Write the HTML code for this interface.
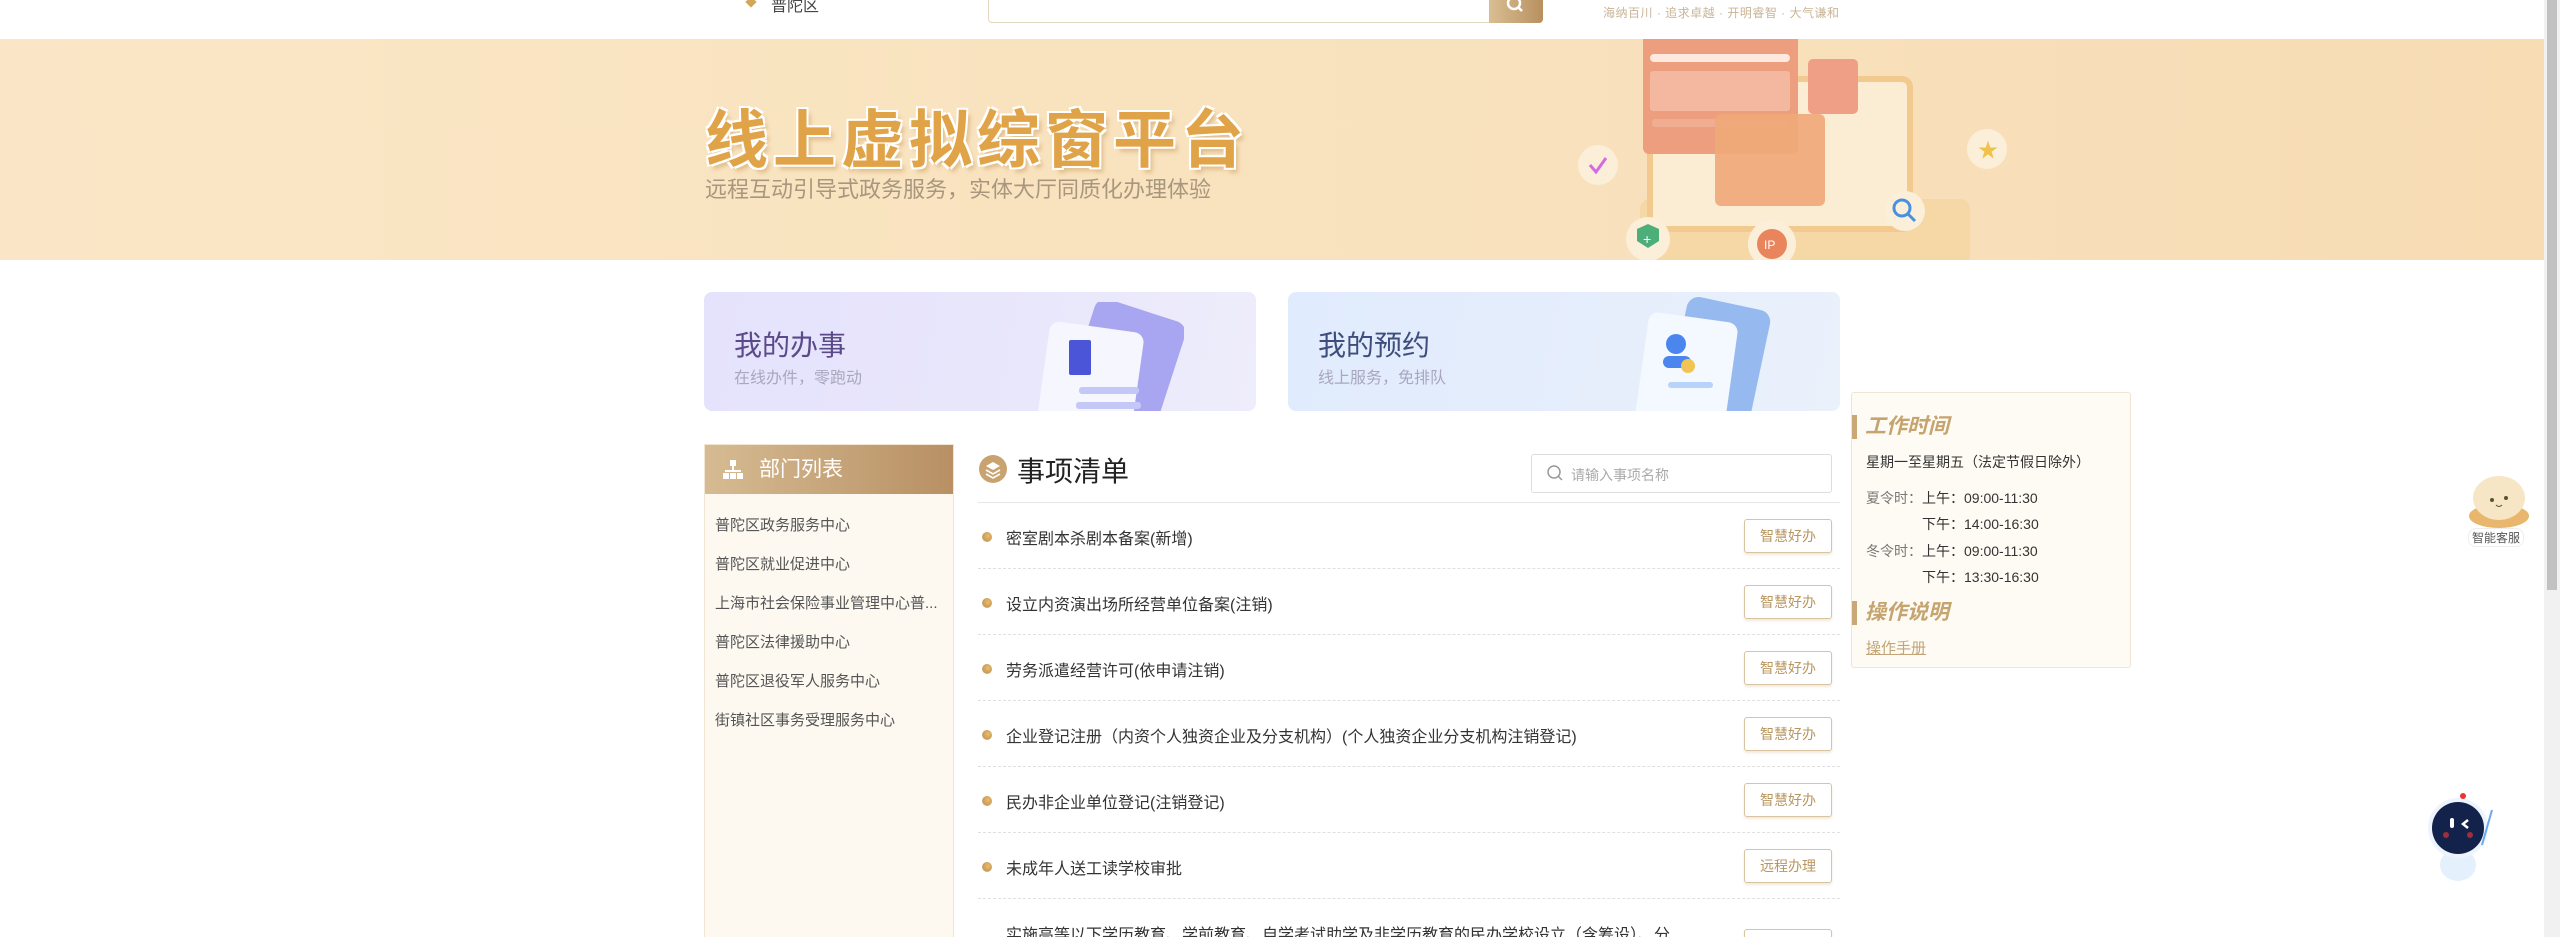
<!DOCTYPE html>
<html style="width:2560px;height:937px;overflow:hidden"><head><meta charset="utf-8">
<style>
*{margin:0;padding:0;box-sizing:border-box}
body{width:2560px;height:937px;overflow:hidden;background:#fff;font-family:"Liberation Sans","Noto Sans CJK SC",sans-serif;position:relative;color:#333}
.abs{position:absolute}
.sb{position:absolute;right:0;top:0;width:16px;height:937px;background:#f1f1f1}
.sb i{position:absolute;left:3px;top:0;width:10px;height:590px;background:#c1c1c1}
.banner{position:absolute;left:0;top:39px;width:2544px;height:221px;background:linear-gradient(90deg,#fae6c6 0%,#f9e3bf 40%,#f8e0bb 70%,#f7dcb4 100%)}
.title{position:absolute;left:705px;top:90px;font-size:63px;font-weight:bold;color:#e0a348;letter-spacing:5px;font-family:"Noto Sans CJK SC",sans-serif;text-shadow:2px 2px 0 #fff,-2px -2px 0 #fff,2px -2px 0 #fff,-2px 2px 0 #fff,4px 5px 4px rgba(180,120,40,.35)}
.sub{position:absolute;left:705px;top:172px;font-size:22px;color:#a8977e}
.card{position:absolute;top:292px;width:552px;height:119px;border-radius:8px;overflow:hidden}
.card h3{position:absolute;left:30px;top:32px;font-size:28px;font-weight:normal}
.card p{position:absolute;left:30px;top:72px;font-size:16px;color:#a9a7c0}
.left{position:absolute;left:704px;top:444px;width:250px;height:500px;background:#fdf9f1;border:1px solid #f1e6d4}
.left .hd{height:49px;background:linear-gradient(90deg,#d6bb92,#b89064);color:#fff;font-size:21px;line-height:49px;padding-left:54px;position:relative}
.left .it{position:absolute;left:10px;font-size:15px;color:#555}
.row{position:absolute;left:978px;width:862px;height:66px;border-bottom:1px dashed #e0e0e0}
.row .t{position:absolute;left:28px;top:22px;font-size:16px;color:#333}
.row .dot{position:absolute;left:4px;top:29px;width:10px;height:10px;border-radius:50%;background:radial-gradient(circle at 60% 40%,#e9bd6c,#c99b59 60%,#f0e2cf)}
.row .b{position:absolute;left:766px;top:16px;width:88px;height:34px;border:1px solid #d9c3a0;border-radius:3px;font-size:14px;color:#b8965f;text-align:center;line-height:32px;box-shadow:0 2px 2px rgba(200,170,120,.25)}
.right{position:absolute;left:1851px;top:392px;width:280px;height:276px;background:#fefbf4;border:1px solid #f0e4d2;border-radius:3px}
.right .h{position:absolute;font-size:21px;font-weight:bold;font-style:italic;color:#c6a46f;border-left:5px solid #c9a875;padding-left:8px;line-height:24px;left:0}
.right .s{position:absolute;left:14px;font-size:14px;color:#333}
.right .g{color:#777}
</style></head><body>
<div class="abs" style="left:747px;top:-2px;width:8px;height:8px;background:#d4a65a;transform:rotate(45deg)"></div>
<div class="abs" style="left:771px;top:-8px;font-size:16px;color:#444">普陀区</div>
<div class="abs" style="left:988px;top:-2px;width:555px;height:25px;border:1px solid #e3d7c0;border-radius:0 0 4px 4px;background:#fff"></div>
<div class="abs" style="left:1489px;top:-2px;width:54px;height:25px;background:linear-gradient(90deg,#d9be93,#b8905f);border-radius:0 0 4px 0"></div>
<svg class="abs" style="left:1505px;top:-4px" width="20" height="20"><circle cx="9" cy="7" r="6" stroke="#fff" stroke-width="2.5" fill="none"/><line x1="13" y1="11" x2="17" y2="15" stroke="#fff" stroke-width="2.5"/></svg>
<div class="abs" style="left:1603px;top:4px;font-size:12px;color:#c8b596;letter-spacing:0.5px">海纳百川 · 追求卓越 · 开明睿智 · 大气谦和</div>

<div class="banner"></div>
<svg class="abs" style="left:1540px;top:39px" width="480" height="221">
<rect x="100" y="160" width="330" height="80" rx="10" fill="#f6d7a6"/>
<rect x="110" y="40" width="260" height="150" rx="8" fill="#fbecd4" stroke="#f2c98e" stroke-width="6"/>
<rect x="103" y="-5" width="155" height="120" rx="6" fill="#ec9e7f"/>
<rect x="110" y="15" width="140" height="8" rx="4" fill="#fde9dd"/>
<rect x="110" y="32" width="140" height="40" rx="3" fill="#f4b8a0"/>
<rect x="112" y="80" width="135" height="8" rx="3" fill="#f0ad92"/>
<rect x="175" y="75" width="110" height="92" rx="6" fill="#f0a878" opacity=".9"/>
<rect x="268" y="20" width="50" height="55" rx="5" fill="#ef9f86"/>
<circle cx="58" cy="126" r="20" fill="#fbefd9"/><path d="M50 126l6 7 10-14" stroke="#d46be0" stroke-width="3" fill="none"/>
<circle cx="447" cy="110" r="20" fill="#fbefd9"/><text x="438" y="118" fill="#f1c24a" font-size="20">★</text>
<circle cx="365" cy="172" r="20" fill="#fbefd9"/><circle cx="362" cy="169" r="8" stroke="#4a90e2" stroke-width="3" fill="none"/><line x1="368" y1="175" x2="375" y2="182" stroke="#4a90e2" stroke-width="3"/>
<circle cx="108" cy="200" r="22" fill="#fbefd9"/><path d="M97 190l11-5 11 5v12l-11 7-11-7z" fill="#4caf7a"/><text x="103" y="205" fill="#fff" font-size="14">+</text>
<circle cx="232" cy="205" r="24" fill="#fbefd9"/><circle cx="232" cy="205" r="15" fill="#e9855c"/><text x="224" y="210" fill="#fff" font-size="12">IP</text>
</svg>
<div class="title">线上虚拟综窗平台</div>
<div class="sub">远程互动引导式政务服务，实体大厅同质化办理体验</div>

<div class="card" style="left:704px;background:linear-gradient(100deg,#e5e2fc,#e9e7fb 60%,#eeedfb)">
<h3 style="color:#5a4a8a">我的办事</h3><p>在线办件，零跑动</p>
<svg class="abs" style="left:320px;top:10px" width="160" height="109"><rect x="55" y="5" width="95" height="110" rx="12" fill="#a8a6f0" transform="rotate(18 100 60)"/><rect x="20" y="25" width="95" height="100" rx="10" fill="#f6f6ff" transform="rotate(8 70 70)"/><rect x="45" y="38" width="22" height="35" rx="2" fill="#4a55d8"/><rect x="55" y="85" width="60" height="7" rx="3" fill="#c4c8f6"/><rect x="52" y="100" width="65" height="7" rx="3" fill="#c4c8f6"/></svg>
</div>
<div class="card" style="left:1288px;background:linear-gradient(100deg,#e0ebfd,#e6eefc 60%,#eaf1fb)">
<h3 style="color:#3e4e7c">我的预约</h3><p>线上服务，免排队</p>
<svg class="abs" style="left:330px;top:0" width="160" height="119"><rect x="60" y="10" width="85" height="120" rx="12" fill="#96b9ef" transform="rotate(12 100 60)"/><rect x="25" y="25" width="90" height="110" rx="10" fill="#f4f8ff" transform="rotate(8 70 70)"/><circle cx="58" cy="52" r="10" fill="#4a86ee"/><rect x="45" y="64" width="28" height="12" rx="6" fill="#4a86ee"/><circle cx="70" cy="74" r="7" fill="#f2c453"/><rect x="50" y="90" width="45" height="6" rx="3" fill="#b8d3fb"/></svg>
</div>

<div class="left"><div class="hd"><svg class="abs" style="left:18px;top:15px" width="20" height="20"><rect x="7" y="0" width="6" height="6" fill="#fff"/><rect x="9" y="6" width="2" height="5" fill="#fff"/><rect x="2" y="10" width="16" height="2" fill="#fff"/><rect x="0" y="13" width="6" height="6" fill="#fff"/><rect x="7" y="13" width="6" height="6" fill="#fff"/><rect x="14" y="13" width="6" height="6" fill="#fff"/></svg>部门列表</div>
<div class="it" style="top:69px">普陀区政务服务中心</div>
<div class="it" style="top:108px">普陀区就业促进中心</div>
<div class="it" style="top:147px">上海市社会保险事业管理中心普...</div>
<div class="it" style="top:186px">普陀区法律援助中心</div>
<div class="it" style="top:225px">普陀区退役军人服务中心</div>
<div class="it" style="top:264px">街镇社区事务受理服务中心</div>
</div>

<svg class="abs" style="left:978px;top:454px" width="30" height="30"><circle cx="15" cy="15" r="14" fill="#c9a36f"/><path d="M8 12l7-4 7 4-7 4z" fill="#fff"/><path d="M8 16l7 4 7-4M8 20l7 4 7-4" stroke="#fff" stroke-width="1.6" fill="none"/></svg>
<div class="abs" style="left:1017px;top:450px;font-size:28px;color:#222">事项清单</div>
<div class="abs" style="left:1531px;top:454px;width:301px;height:39px;border:1px solid #ddd;border-radius:3px"></div>
<svg class="abs" style="left:1546px;top:464px" width="20" height="20"><circle cx="8" cy="8" r="6" stroke="#999" stroke-width="1.5" fill="none"/><line x1="12" y1="12" x2="16" y2="16" stroke="#999" stroke-width="1.5"/></svg>
<div class="abs" style="left:1571px;top:465px;font-size:14px;color:#aaa">请输入事项名称</div>
<div class="abs" style="left:978px;top:502px;width:862px;height:1px;background:#e6e6e6"></div>

<div class="row" style="top:503px"><i class="dot"></i><div class="t">密室剧本杀剧本备案(新增)</div><div class="b">智慧好办</div></div>
<div class="row" style="top:569px"><i class="dot"></i><div class="t">设立内资演出场所经营单位备案(注销)</div><div class="b">智慧好办</div></div>
<div class="row" style="top:635px"><i class="dot"></i><div class="t">劳务派遣经营许可(依申请注销)</div><div class="b">智慧好办</div></div>
<div class="row" style="top:701px"><i class="dot"></i><div class="t">企业登记注册（内资个人独资企业及分支机构）(个人独资企业分支机构注销登记)</div><div class="b">智慧好办</div></div>
<div class="row" style="top:767px"><i class="dot"></i><div class="t">民办非企业单位登记(注销登记)</div><div class="b">智慧好办</div></div>
<div class="row" style="top:833px"><i class="dot"></i><div class="t">未成年人送工读学校审批</div><div class="b">远程办理</div></div>
<div class="row" style="top:899px;border:none"><div class="t" style="top:22px">实施高等以下学历教育、学前教育、自学考试助学及非学历教育的民办学校设立（含筹设）、分</div><div class="b" style="top:30px"></div></div>

<div class="right">
<div class="h" style="top:22px">工作时间</div>
<div class="s" style="top:59px">星期一至星期五（法定节假日除外）</div>
<div class="s" style="top:95px"><span class="g">夏令时：</span>上午：09:00-11:30</div>
<div class="s" style="top:121px;left:70px">下午：14:00-16:30</div>
<div class="s" style="top:148px"><span class="g">冬令时：</span>上午：09:00-11:30</div>
<div class="s" style="top:174px;left:70px">下午：13:30-16:30</div>
<div class="h" style="top:208px">操作说明</div>
<div class="s" style="top:244px;color:#c3a476;text-decoration:underline;font-size:15px">操作手册</div>
</div>

<svg class="abs" style="left:2466px;top:468px" width="66" height="62"><ellipse cx="33" cy="48" rx="30" ry="12" fill="#e8b66c"/><ellipse cx="33" cy="30" rx="26" ry="22" fill="#f6e6c6"/><circle cx="26" cy="32" r="2" fill="#553"/><circle cx="40" cy="30" r="2" fill="#553"/><path d="M30 37q3 3 6 0" stroke="#553" fill="none"/></svg>
<div class="abs" style="left:2468px;top:528px;font-size:12px;color:#555;background:#fff;border:1px solid #eee;border-radius:8px;padding:0 3px">智能客服</div>
<svg class="abs" style="left:2420px;top:790px" width="80" height="95"><ellipse cx="38" cy="75" rx="18" ry="16" fill="#e5f0fd"/><circle cx="38" cy="38" r="30" fill="#eef4fd"/><circle cx="38" cy="38" r="26" fill="#13224a"/><rect x="30" y="28" width="4" height="10" rx="2" fill="#fff"/><path d="M48 30l-5 4 5 4" stroke="#fff" stroke-width="2.5" fill="none"/><circle cx="26" cy="45" r="3" fill="#d33" opacity=".7"/><circle cx="50" cy="45" r="3" fill="#d33" opacity=".7"/><circle cx="43" cy="6" r="3" fill="#e33"/><line x1="72" y1="20" x2="62" y2="55" stroke="#6aa8f0" stroke-width="2"/></svg>

<div class="sb"><i></i></div>
</body></html>
